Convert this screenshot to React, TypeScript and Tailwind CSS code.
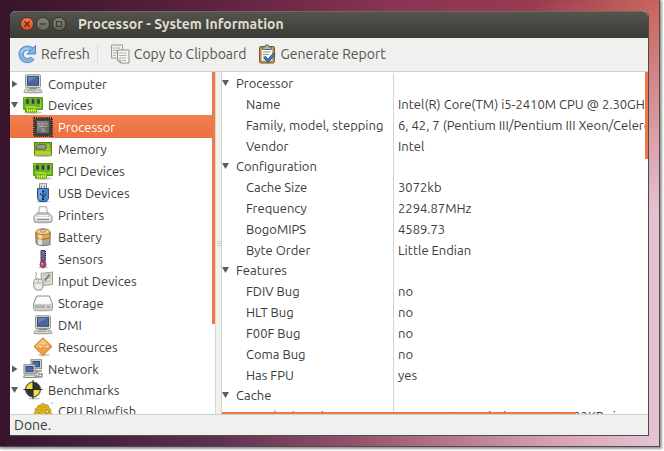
import { ReactNode, useState } from "react";
import clsx from "clsx";

type NodeProps = { id: string; label: string; icon: ReactNode; group?: boolean; open?: boolean };
type Section = { title: string; rows: [string, string][] };

function Icon({ children }: { children: ReactNode }) {
  return (
    <svg viewBox="0 0 20 20" className="size-5 shrink-0" aria-hidden="true">
      {children}
    </svg>
  );
}

const ComputerIcon = () => (
  <Icon>
    <ellipse cx="10" cy="18.6" rx="9.5" ry="1" fill="#c9c9c5" />
    <rect x="2.5" y="0.8" width="15" height="12.7" rx="1" fill="#d6d7d2" stroke="#94978f" />
    <rect x="4.5" y="2.7" width="11" height="8.6" fill="#4a679c" stroke="#2f4b80" />
    <path d="M5 3h9.800l-9.800 5z" fill="#6683b8" />
    <path d="M6 13.500h8v1.500h-8z" fill="#8b8d88" />
    <path d="M2.500 15h15l1.600 3.300h-18.200z" fill="#e6e7e2" stroke="#888b84" strokeWidth="0.8" />
    <path d="M4 16.500h9M14.500 16.500h2" stroke="#a3a59f" />
  </Icon>
);

const BoardIcon = () => (
  <Icon>
    <ellipse cx="10" cy="17.500" rx="9" ry="1.500" fill="#c3d0b0" />
    <path d="M0.600 2.500h18.900v12h-6v2.500h-11v-2.500h-1.900z" fill="#69b813" stroke="#539c10" />
    <path d="M2 11.500h10v4h-8v-3h13.500v-8" fill="none" stroke="#9bdd36" />
    <path d="M3 4h3v5h-3zM8.500 4h3v5h-3zM14 4h3v5h-3z" fill="#343c3c" stroke="#7b9270" strokeWidth="0.600" />
    <path d="M4.500 14v3M6.500 14v3M8.500 14v3M10.500 14v3M12.500 14v3" stroke="#e4df42" />
    <path d="M1 3.500h1.500" stroke="#d8e85c" />
  </Icon>
);

const ChipIcon = () => (
  <Icon>
    <rect x="1" y="1" width="18" height="18" fill="none" stroke="#292b2b" strokeWidth="2" strokeDasharray="1.200 0.900" />
    <rect x="2" y="2" width="16" height="16" rx="1.500" fill="#464948" stroke="#282a2a" />
    <rect x="4" y="4" width="12" height="12" rx="1" fill="#6a6d6c" />
    <path d="M4 4h12l-12 11z" fill="#7f8281" />
    <path d="M5 7h2M8 7h3M12 7h3M6 9.500h8M8 12h4M8 14h5" stroke="#b5b8b7" strokeWidth="0.900" />
  </Icon>
);

const MemoryIcon = () => (
  <Icon>
    <ellipse cx="10" cy="17" rx="9" ry="1.200" fill="#c5cab5" />
    <rect x="1.500" y="3.500" width="17" height="12.500" fill="#7fae22" stroke="#4f8510" />
    <path d="M3.500 7l2-1.500h6l1.500 1.500v3h-9.500z" fill="#969b8e" stroke="#5a6550" />
    <path d="M15 5v5M13 10.500h4" stroke="#b9dc4e" />
    <path d="M3 12v4M5 12v4M7 12v4M9 12v4M11 12v4M13 12v4M15 12v4M17 12v4" stroke="#eadf3b" strokeWidth="1.200" />
  </Icon>
);

const UsbIcon = () => (
  <Icon>
    <ellipse cx="10" cy="18.500" rx="7" ry="1" fill="#c9cbd0" />
    <rect x="6.500" y="0.700" width="7" height="5.500" fill="#e2e3df" stroke="#8a8c88" />
    <path d="M8.500 3v1.500M11.500 3v1.500" stroke="#555" />
    <path d="M4.500 5.500h11v10l-2 3h-7l-2-3z" fill="#4b86c8" stroke="#28568f" />
    <path d="M5.500 6.500h4v10h-3l-1-1.500z" fill="#76a8dd" />
    <path d="M10 16v-8M10 13l-2.500-1.500v-1.500M10 14l2.500-1.500v-2" fill="none" stroke="#152f56" />
    <circle cx="10" cy="16" r="1.200" fill="#152f56" />
    <path d="M8.600 9l1.400-2 1.400 2z" fill="#152f56" />
  </Icon>
);

const PrinterIcon = () => (
  <Icon>
    <ellipse cx="10" cy="17.500" rx="9" ry="1" fill="#cfcfcb" />
    <path d="M5.500 9l1-7.300h7l1 7.300z" fill="#fbfbfa" stroke="#a9aaa6" />
    <path d="M1 11.500l3-3.500h12l3 3.500v4.500l-1 1h-16l-1-1z" fill="#e2e3df" stroke="#8d8f8a" />
    <path d="M5 9.500h10l1 2.500h-12z" fill="#f8f8f7" stroke="#a9aba6" strokeWidth="0.700" />
    <path d="M4 14.500h12" stroke="#878984" />
    <path d="M2 12.500h16" stroke="#fff" />
  </Icon>
);

const BatteryIcon = () => (
  <Icon>
    <ellipse cx="12" cy="17.500" rx="7" ry="1.500" fill="#c8c4bc" />
    <path d="M3 5v11c0 3.300 14 3.300 14 0v-11z" fill="#aaa9a2" stroke="#72716b" />
    <path d="M5 6v11.300c1.300 0.700 3 0.900 4 0.900v-12z" fill="#e2e1dc" />
    <path d="M3 5v5c0 2.700 14 2.700 14 0v-5z" fill="#e9a54c" stroke="#98682c" />
    <path d="M5 7v4c1 0.600 2.500 0.900 4 0.900v-4.500z" fill="#fad894" />
    <ellipse cx="10" cy="4.700" rx="7" ry="2.900" fill="#f5cf93" stroke="#ad7a39" />
    <ellipse cx="10" cy="3.800" rx="2.300" ry="1.400" fill="#eae8e1" stroke="#8d8064" />
  </Icon>
);

const SensorIcon = () => (
  <Icon>
    <ellipse cx="10" cy="18.500" rx="5" ry="0.900" fill="#ccc" />
    <path d="M8 1.500h4v11.500h-4z" fill="#6674b5" stroke="#343e74" />
    <path d="M12.500 2v10" stroke="#202946" strokeDasharray="1 1" />
    <path d="M10 5v10" stroke="#d32f4a" strokeWidth="1.600" />
    <circle cx="10" cy="15.500" r="3" fill="#e03d52" stroke="#54406d" />
    <circle cx="9" cy="14.700" r="0.900" fill="#fbb3ba" />
  </Icon>
);

const InputIcon = () => (
  <Icon>
    <path d="M8 2.500l11.500-1.500v12.500l-10.500 1z" fill="#ddddd4" stroke="#9a9b92" />
    <path d="M10 5l7-2M10 8l8-1.500M11 11l7-1" stroke="#a5a79d" strokeDasharray="1.500 0.800" />
    <path d="M11 9l5-6 1.500 1-5 6z" fill="#777b70" />
    <path d="M4.500 8.500c-4-3 1-5-2-7.500" fill="none" stroke="#999b94" />
    <path d="M2 8h6l2 2.500v5.500l-2 3h-5l-2.200-3v-5.500z" fill="#ecece7" stroke="#8f928a" />
    <path d="M1.500 12h8M5.300 8v4" stroke="#b0b1ab" />
  </Icon>
);

const StorageIcon = () => (
  <Icon>
    <ellipse cx="10" cy="17.500" rx="9.500" ry="1" fill="#cfcfcf" />
    <path d="M3.500 3h13l3 8v5l-1 1h-17l-1-1v-5z" fill="#ededeb" stroke="#90928f" />
    <path d="M4.300 4h11.400l2.500 6.500h-16.400z" fill="#fafafa" />
    <path d="M0.800 11h18.400v4.800l-1 0.900h-16.400l-1-0.900z" fill="#cfd0ce" />
    <path d="M3 12v3M5 12v3M7 12v3M9 12v3M11 12v3" stroke="#858784" strokeWidth="0.800" />
    <path d="M14 14h3" stroke="#727572" />
  </Icon>
);

const ResourceIcon = () => (
  <Icon>
    <ellipse cx="11" cy="18" rx="6" ry="1.300" fill="#d3cdc5" />
    <path d="M10 0.800l9 8.800-9 8.800-9-8.800z" fill="#eda04b" stroke="#c9701d" />
    <path d="M10 2.300l7 7-4.500-1.500-4 1-4.500 1.500-1.500-0.700z" fill="#f8c77f" />
    <path d="M5 9l3-2v2h5v-2l3 2.500-3 2.500v-1.500h-5v2z" fill="#ffe2af" stroke="#d78937" strokeWidth="0.600" />
  </Icon>
);

const NetworkIcon = () => (
  <Icon>
    <rect x="8" y="0.700" width="10.500" height="9" fill="#d6d8d2" stroke="#858881" />
    <rect x="10" y="2.500" width="6.500" height="5.300" fill="#456aa5" stroke="#294b80" />
    <rect x="1" y="5.700" width="11" height="9" fill="#dcddd8" stroke="#858881" />
    <rect x="3" y="7.500" width="7" height="5.300" fill="#466da9" stroke="#294b80" />
    <path d="M1.500 16h10l1.500 2.500h-12.500z" fill="#e3e4df" stroke="#898c85" />
    <path d="M12 12h7M14 12v3h5v3M12 18h7" fill="none" stroke="#898d87" strokeWidth="1.400" />
    <rect x="13" y="14" width="3" height="3" fill="#eee" stroke="#777" strokeWidth="0.700" />
  </Icon>
);

const BenchmarkIcon = () => (
  <Icon>
    <ellipse cx="11" cy="18.500" rx="6" ry="1" fill="#cbc9c0" />
    <circle cx="10" cy="9.500" r="7.500" fill="#303334" />
    <path d="M10 9.500v-7a7 7 0 0 0-7 7zM10 9.500v7a7 7 0 0 0 7-7z" fill="#f4dd3d" />
    <circle cx="10" cy="9.500" r="7.500" fill="none" stroke="#55554b" />
    <path d="M10 0v19M0.500 9.500h19" stroke="#242729" />
  </Icon>
);

const BlowfishIcon = () => (
  <Icon>
    <path d="M1 12l1.500-2-0.500-2 2-1 1-2.500 2.500-0.500 2-2 2.500 1.500 3 0.500 1 2.500 2 2-0.500 2.500 1.500 2-2 5h-14z" fill="#e0b422" stroke="#a88316" strokeWidth="0.700" />
    <path d="M6 6h8M4 9h6M5 11.500h4" stroke="#b8860f" strokeWidth="1" strokeDasharray="2 1.500" />
    <circle cx="14" cy="10.500" r="1.800" fill="#f6dc67" stroke="#8c6b12" strokeWidth="0.700" />
    <path d="M19 1v2" stroke="#aaa" />
  </Icon>
);

const RefreshIcon = () => (
  <Icon>
    <path d="M15.500 14a6.300 6.300 0 1 1-1-8.500" fill="none" stroke="#4f8ac6" strokeWidth="5.200" />
    <path d="M18.500 1.500v8.500h-8.700z" fill="#82b4e4" stroke="#4f8ac6" strokeLinejoin="round" />
    <path d="M15.500 14a6.300 6.300 0 1 1-1-8.500" fill="none" stroke="#82b4e4" strokeWidth="3.600" />
    <path d="M4 9a6 6 0 0 1 8-4" fill="none" stroke="#b7d7f2" strokeWidth="1.300" />
  </Icon>
);

const CopyIcon = () => (
  <Icon>
    <path d="M1.500 1h11v13h-11z" fill="#f0f0ed" stroke="#999b96" />
    <path d="M3 4h7M3 6.500h7M3 9h4M3 11.500h3" stroke="#b1b3ad" />
    <path d="M7.500 6h11.500v13h-8.500l-3-3z" fill="#f5f5f2" stroke="#8f918c" />
    <path d="M9 9h7.500M9 11.500h7.500M9 14h7M12 16.500h4" stroke="#b1b3ad" />
    <path d="M7.500 16h3v3z" fill="#d2d3cf" stroke="#8f918c" strokeWidth="0.700" />
  </Icon>
);

const ReportIcon = () => (
  <Icon>
    <rect x="2.500" y="2.500" width="15" height="16.500" rx="1.500" fill="#c99045" stroke="#855713" />
    <path d="M4.500 4.500h11v12.500h-11z" fill="#f6f6f3" stroke="#aaa79d" strokeWidth="0.700" />
    <path d="M6 8h7.500M6 10.500h6M6 13h3" stroke="#999b96" />
    <path d="M5.500 5.500v-2.500h2.500l0.700-2h2.600l0.700 2h2.500v2.500z" fill="#b2b5ae" stroke="#656861" />
    <path d="M7.500 13l3.500 4 6.500-7.500" fill="none" stroke="#204a87" strokeWidth="3" />
    <path d="M7.500 13l3.500 4 6.500-7.500" fill="none" stroke="#4b7fc0" strokeWidth="1.700" />
  </Icon>
);

function Triangle({ open }: { open?: boolean }) {
  return (
    <svg viewBox="0 0 8 8" className="size-2 shrink-0" aria-hidden="true">
      <path d={open ? "M0 1h7l-3.500 6z" : "M1 0.500v7l5.500-3.500z"} fill="#5c5c58" />
    </svg>
  );
}

const nodes: NodeProps[] = [
  { id: "computer", label: "Computer", icon: <ComputerIcon />, group: true },
  { id: "devices", label: "Devices", icon: <BoardIcon />, group: true, open: true },
  { id: "processor", label: "Processor", icon: <ChipIcon /> },
  { id: "memory", label: "Memory", icon: <MemoryIcon /> },
  { id: "pci", label: "PCI Devices", icon: <BoardIcon /> },
  { id: "usb", label: "USB Devices", icon: <UsbIcon /> },
  { id: "printers", label: "Printers", icon: <PrinterIcon /> },
  { id: "battery", label: "Battery", icon: <BatteryIcon /> },
  { id: "sensors", label: "Sensors", icon: <SensorIcon /> },
  { id: "input", label: "Input Devices", icon: <InputIcon /> },
  { id: "storage", label: "Storage", icon: <StorageIcon /> },
  { id: "dmi", label: "DMI", icon: <ComputerIcon /> },
  { id: "resources", label: "Resources", icon: <ResourceIcon /> },
  { id: "network", label: "Network", icon: <NetworkIcon />, group: true },
  { id: "benchmarks", label: "Benchmarks", icon: <BenchmarkIcon />, group: true, open: true },
  { id: "blowfish", label: "CPU Blowfish", icon: <BlowfishIcon /> },
];

const sections: Section[] = [
  {
    title: "Processor",
    rows: [
      ["Name", "Intel(R) Core(TM) i5-2410M CPU @ 2.30GHz"],
      ["Family, model, stepping", "6, 42, 7 (Pentium III/Pentium III Xeon/Celeron)"],
      ["Vendor", "Intel"],
    ],
  },
  {
    title: "Configuration",
    rows: [
      ["Cache Size", "3072kb"],
      ["Frequency", "2294.87MHz"],
      ["BogoMIPS", "4589.73"],
      ["Byte Order", "Little Endian"],
    ],
  },
  {
    title: "Features",
    rows: [
      ["FDIV Bug", "no"],
      ["HLT Bug", "no"],
      ["F00F Bug", "no"],
      ["Coma Bug", "no"],
      ["Has FPU", "yes"],
    ],
  },
  { title: "Cache", rows: [["Level 1 (Data)", "8-way set-associative, 64 sets, 32KB size"]] },
];

function TitleBar() {
  return (
    <header className="flex h-[27px] shrink-0 items-center rounded-t-md border-t border-[#6b6b64] bg-linear-to-b from-[#55554e] to-[#3a3a35] px-2.5 pb-0.5">
      <div className="flex gap-0.5">
        <button aria-label="Close" className="flex size-3.5 items-center justify-center rounded-full border border-[#34342f] bg-linear-to-b from-[#f67c50] to-[#dc4718]">
          <svg viewBox="0 0 8 8" className="size-2">
            <path d="M1.500 1.500l5 5M6.500 1.500l-5 5" stroke="#5b2410" strokeWidth="1.300" />
          </svg>
        </button>
        <button aria-label="Minimize" className="flex size-3.5 items-center justify-center rounded-full border border-[#34342f] bg-linear-to-b from-[#85847b] to-[#66655e]">
          <svg viewBox="0 0 8 8" className="size-2">
            <path d="M1 4h6" stroke="#3b3b36" strokeWidth="1.300" />
          </svg>
        </button>
        <button aria-label="Maximize" className="flex size-3.5 items-center justify-center rounded-full border border-[#34342f] bg-linear-to-b from-[#85847b] to-[#66655e]">
          <svg viewBox="0 0 8 8" className="size-2">
            <path d="M1.500 1.500h5v5h-5z" fill="none" stroke="#3b3b36" strokeWidth="1.200" />
          </svg>
        </button>
      </div>
      <h1 className="ml-3 truncate text-sm font-bold text-[#dfdbd2]">Processor - System Information</h1>
    </header>
  );
}

function ToolBar() {
  return (
    <div className="flex h-[33px] shrink-0 items-center pb-px pl-[7px] text-sm text-[#55554f]">
      <button className="flex items-center gap-1">
        <RefreshIcon />
        Refresh
      </button>
      <span className="ml-[7px] h-5 w-px bg-[#dcdcd9]" />
      <button className="ml-3 flex items-center gap-1">
        <CopyIcon />
        Copy to Clipboard
      </button>
      <button className="ml-2.5 flex items-center gap-1">
        <ReportIcon />
        Generate Report
      </button>
    </div>
  );
}

export default function App() {
  const [selected, setSelected] = useState("processor");

  return (
    <div className="h-screen overflow-hidden bg-white pr-1 pb-1 font-['Ubuntu','Noto_Sans',sans-serif] text-[13px] leading-5 text-[#3c3c3c]">
      <div className="relative flex h-full border-r border-b border-[#4a4a4a] bg-[linear-gradient(to_right,#35142c_0%,#5c3050_32%,#97546e_55%,#d8a0b4_84%,#e6c3d6_100%)] pt-[11px] pr-2.5 pb-2.5 pl-2.5 shadow-[1px_1px_2px_1px_#999]">
        <div className="absolute inset-0 bg-[linear-gradient(to_right,#38142a_0%,#5e2240_32%,#8a3353_60%,#96384f_80%,#c8655a_100%)] mask-[linear-gradient(to_bottom,black,transparent_48%)]" />
        <main className="relative flex min-w-0 flex-1 flex-col rounded-t-md border-r border-b border-[#4b4b47] bg-[#f0f0ee]">
          <TitleBar />
          <ToolBar />
          <div className="flex min-h-0 flex-1 border-y border-[#d0d0cc]">
            <nav aria-label="Sections" className="flex w-[206px] shrink-0 overflow-hidden border-r border-[#d8d8d4] bg-white">
              <ul className="min-w-0 flex-1 pt-px">
                {nodes.map((node) => (
                  <li key={node.id}>
                    <button
                      onClick={() => setSelected(node.id)}
                      className={clsx(
                        "flex w-full items-center gap-[5px] text-left whitespace-nowrap",
                        node.group ? "h-[21px] pl-px" : "pl-[23px]",
                        !node.group && (selected === node.id ? "h-[23px] bg-linear-to-b from-[#f17f50] to-[#ed6f40] text-white" : "h-[22px]"),
                      )}
                    >
                      <span className="flex items-center gap-1">
                        {node.group && <Triangle open={node.open} />}
                        {node.icon}
                      </span>
                      {node.label}
                    </button>
                  </li>
                ))}
              </ul>
              <div className="h-[252px] w-[3px] bg-[#f07746]" />
            </nav>
            <div className="flex w-[5px] shrink-0 flex-col items-center justify-center gap-px">
              <span className="h-px w-1 bg-[#cfcfcb]" />
              <span className="h-px w-1 bg-[#cfcfcb]" />
              <span className="h-px w-1 bg-[#cfcfcb]" />
            </div>
            <section className="relative min-w-0 flex-1 overflow-hidden border-l border-[#d0d0cc] bg-white pt-px">
              <table className="w-full table-fixed border-separate border-spacing-0 whitespace-nowrap">
                <colgroup>
                  <col className="w-[172px]" />
                  <col />
                </colgroup>
                {sections.map((section) => (
                  <tbody key={section.title}>
                    <tr>
                      <th className="h-5 border-r border-[#d4d4d4] p-0 text-left font-normal">
                        <span className="flex items-center gap-1.5">
                          <Triangle open />
                          {section.title}
                        </span>
                      </th>
                      <td className="p-0" />
                    </tr>
                    {section.rows.map(([name, value]) => (
                      <tr key={name}>
                        <td className="h-[21px] border-r border-[#d4d4d4] p-0 pl-6">{name}</td>
                        <td className="h-[21px] overflow-hidden p-0 pl-1">{value}</td>
                      </tr>
                    ))}
                  </tbody>
                ))}
              </table>
              <div className="absolute top-0 right-0 h-[87px] w-[3px] bg-[#f07746]" />
              <div className="absolute bottom-0 left-0 h-0.5 w-[83%] bg-[#f07746]" />
            </section>
          </div>
          <footer className="h-5 shrink-0 px-1 text-sm">Done.</footer>
        </main>
      </div>
    </div>
  );
}
